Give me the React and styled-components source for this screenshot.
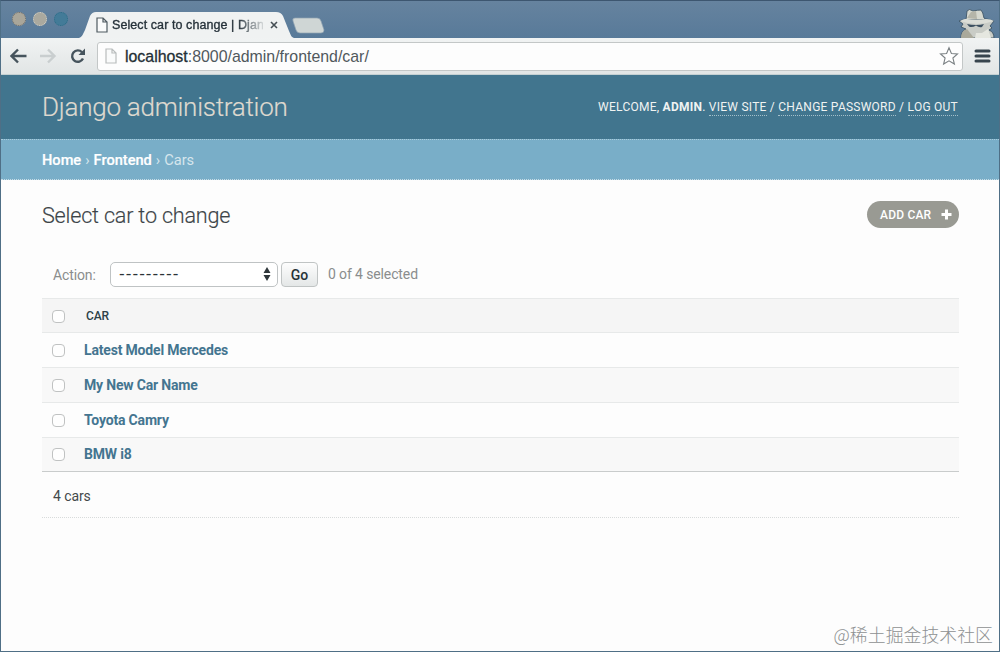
import React from 'react';
import styled, { createGlobalStyle } from 'styled-components';

const GlobalStyle = createGlobalStyle`
  * {
    box-sizing: border-box;
  }

  body {
    margin: 0;
    font-family: Roboto, 'Liberation Sans', sans-serif;
    overflow: hidden;
  }
`;

const Window = styled.div`
  position: relative;
  display: flex;
  flex-direction: column;
  width: 1000px;
  height: 652px;
  border: 1px solid #4f6f86;
  border-top-color: #3d5670;
  background: #fdfdfd;
`;

const TabStrip = styled.div`
  display: flex;
  align-items: flex-end;
  height: 37px;
  padding-left: 11px;
  background: linear-gradient(#66839f, #587a99);
`;

const Lights = styled.div`
  display: flex;
  gap: 7px;
  width: 67px;
  height: 26px;
`;

const Light = styled.span`
  width: 14px;
  height: 14px;
  border-radius: 50%;
  background: ${props => props.color};
  border: 1px dotted ${props => props.edge};
`;

const Tab = styled.div`
  position: relative;
  display: flex;
  align-items: center;
  width: 214px;
  height: 26px;
  padding-left: 17px;
  font: 12.5px 'Liberation Sans', sans-serif;
  color: #26323a;
`;

const TabShape = styled.svg`
  position: absolute;
  left: 0;
  top: 0;
`;

const TabTitle = styled.span`
  position: relative;
  width: 151px;
  margin-left: 4px;
  margin-right: 1px;
  white-space: nowrap;
  letter-spacing: 0.08px;
  -webkit-text-stroke: 0.35px #26323a;
  mask-image: linear-gradient(to right, #000 83%, rgba(0, 0, 0, 0.15));
`;

const TabIcon = styled.svg`
  position: relative;
  flex: none;
`;

const NewTab = styled.svg`
  margin: 0 auto 4px -1px;
`;

const Incognito = styled.svg`
  margin-right: 3px;
`;

const Toolbar = styled.div`
  display: flex;
  align-items: center;
  height: 37px;
  padding: 0 8px 0 9px;
  background: linear-gradient(#f1f3f3, #e1e5e5);
  border-bottom: 1px solid #c4d0d2;
`;

const NavIcons = styled.svg`
  flex: none;
  margin-right: 9px;
`;

const AddressBar = styled.div`
  display: flex;
  align-items: center;
  flex: 1;
  height: 29px;
  margin-right: 11px;
  padding: 0 3px 0 7px;
  border: 1px solid #c3c7c7;
  border-radius: 3px;
  background: #fdfdfd;
`;

const Url = styled.div`
  flex: 1;
  margin-left: 8px;
  padding-top: 1px;
  font: 15.9px 'Liberation Sans', sans-serif;
  color: #50585c;

  & span {
    color: #232e35;
    -webkit-text-stroke: 0.3px #232e35;
  }
`;

const Header = styled.header`
  display: flex;
  align-items: center;
  justify-content: space-between;
  height: 64px;
  padding: 0 41px;
  background: #41758e;
`;

const Branding = styled.h1`
  margin: 0;
  font-size: 26px;
  font-weight: 300;
  letter-spacing: -0.25px;
  color: #ded9cf;
  -webkit-text-stroke: 0.2px #ded9cf;
`;

const UserTools = styled.div`
  padding-top: 1px;
  font-size: 12px;
  letter-spacing: 0.25px;
  color: #f0f3f2;
  white-space: nowrap;
`;

const UserLink = styled.a`
  display: inline-block;
  line-height: 16px;
  border-bottom: 1px dotted #a5c0cb;
`;

const Breadcrumbs = styled.nav`
  display: flex;
  align-items: center;
  gap: 4px;
  height: 41px;
  padding-left: 41px;
  background: #79aec8;
  border-top: 1px dotted #a9cbdb;
  border-bottom: 1px dotted #c5dce6;
  font-size: 14.6px;
  color: #d6e6ed;

  & b {
    font-weight: 500;
    color: #fff;
    -webkit-text-stroke: 0.2px #fff;
  }
`;

const Content = styled.main`
  flex: 1;
  padding: 20px 40px 0 41px;
`;

const TitleRow = styled.div`
  display: flex;
  align-items: center;
  justify-content: space-between;
  height: 30px;
`;

const Title = styled.h2`
  margin: 0;
  font-size: 21.6px;
  font-weight: 300;
  letter-spacing: -0.2px;
  color: #3c4448;
  -webkit-text-stroke: 0.15px #3c4448;
`;

const AddButton = styled.a`
  display: flex;
  align-items: center;
  justify-content: space-between;
  width: 92px;
  height: 27px;
  margin-bottom: 2px;
  padding: 1px 7px 0 13px;
  border-radius: 14px;
  background: #999a93;
  color: #fff;
  font-size: 12px;
  font-weight: 500;
  letter-spacing: 0.2px;
`;

const Actions = styled.div`
  display: flex;
  align-items: center;
  height: 26px;
  margin-top: 31px;
  padding-left: 11px;
  font-size: 14px;
  letter-spacing: -0.12px;
  color: #8a8d8d;
`;

const Label = styled.label`
  width: 57px;
  padding-top: 2px;
`;

const Select = styled.div`
  display: flex;
  align-items: center;
  justify-content: space-between;
  width: 168px;
  height: 25px;
  margin-right: 3px;
  padding: 0 6px 0 8px;
  border: 1px solid #bfc3c4;
  border-radius: 5px;
  background: #fff;
  color: #2b3337;
  font: 17px 'Liberation Sans', sans-serif;
  letter-spacing: 1.05px;
`;

const GoButton = styled.button`
  width: 37px;
  height: 25px;
  margin-right: 10px;
  padding: 1px 0 0;
  border: 1px solid #c0c4c4;
  border-radius: 4px;
  background: linear-gradient(#fdfdfd, #e4e7e7);
  color: #263238;
  font: 500 14px Roboto, sans-serif;
`;

const Results = styled.div`
  margin-top: 11px;
  border-bottom: 1px solid #c9cccc;
`;

const Row = styled.div`
  display: flex;
  align-items: center;
  height: ${props => (props.$head ? 34.2 : 34.8)}px;
  padding-left: 10px;
  border-top: 1px solid #e7e9e9;
  background: ${props => props.$shade || '#fdfdfd'};
`;

const Checkbox = styled.span`
  width: 13px;
  height: 13px;
  margin-top: 1px;
  border: 1px solid #c0c2c2;
  border-radius: 4px;
  background: #fefefe;
`;

const HeadLabel = styled.span`
  margin: 1px 0 0 21px;
  font-size: 12px;
  font-weight: 500;
  letter-spacing: -0.2px;
  color: #2d4148;
`;

const CarLink = styled.a`
  margin-left: 19px;
  font-size: 14px;
  font-weight: 700;
  letter-spacing: -0.18px;
  color: #447590;
`;

const Paginator = styled.div`
  height: 46px;
  padding-left: 11px;
  border-bottom: 1px dotted #d8dbdb;
  line-height: 48px;
  font-size: 14px;
  letter-spacing: -0.1px;
  color: #44494b;
`;

const Watermark = styled.div`
  position: absolute;
  right: 6px;
  bottom: 5px;
  font: 300 17.9px/24px 'Noto Sans CJK SC', sans-serif;
  color: #8e9192;
`;

const cars = ['Latest Model Mercedes', 'My New Car Name', 'Toyota Camry', 'BMW i8'];

const PageIcon = ({ as: Svg = 'svg', color }) => (
  <Svg width="12" height="16" viewBox="0 0 12 16" fill="#fafbfb" stroke={color} strokeWidth="1.2">
    <path d="M1 1H7L11 5V15H1ZM7 1V5H11" />
  </Svg>
);

const Browser = () => (
  <>
    <TabStrip>
      <Lights>
        <Light color="#a9a69a" edge="#746f68" />
        <Light color="#aaa99f" edge="#d8d4c9" />
        <Light color="#437b98" edge="#2b6c86" />
      </Lights>
      <Tab>
        <TabShape width="216" height="26">
          <path d="M0 26C3 25 4 22 6 18L11 4Q13 0 17 0H197Q202 0 204 4L210 19C212 23 212 25 215 26Z" fill="#f0f2f2" />
        </TabShape>
        <PageIcon as={TabIcon} color="#4f5a61" />
        <TabTitle>Select car to change | Djan</TabTitle>
        <TabIcon width="15" height="8" viewBox="-6 0 15 8">
          <path d="M1 1L7 7M7 1L1 7" stroke="#454e54" strokeWidth="1.6" />
        </TabIcon>
      </Tab>
      <NewTab width="33" height="17">
        <path d="M3 1H25Q28 1 29 4L32 13Q32 16 29 16H8Q5 16 4 13L1 4Q0 1 3 1Z" fill="#cfd6d5" stroke="#91a3b1" strokeWidth="0.7" />
      </NewTab>
      <Incognito width="38" height="29" viewBox="0 0 38 29">
        <path d="M3 29Q3 22 8 20L3 18L5 15L1 12L8 10H29L36 12L32 17L34 19L31 21Q36 23 36 29Z" fill="#c9ccc6" stroke="#3b5366" strokeWidth="0.9" />
        <path d="M8 11L9 2Q11 -1 15 2Q20 1 23 1Q25 3 26 9L29 11Z" fill="#d6d8cf" stroke="#3f5668" strokeWidth="0.9" />
        <path d="M2 12Q8 9 9 10Q18 12 28 10Q33 10 36 12Q19 18 2 12Z" fill="#dcded7" />
        <path d="M13 3L18 2L19 10L9 9Z" fill="#b5b5a9" />
        <path d="M9 15Q13 16 18 16Q23 16 26 15L24 18Q21 19 18 16.5Q14 19 11 17.5Z" fill="#3d5060" />
        <path d="M3 29Q3 22 9 20L16 29Z" fill="#aaa99b" />
        <path d="M17 29L18 24L24 24L30 20L33 29Z" fill="#e5e7e0" />
      </Incognito>
    </TabStrip>
    <Toolbar>
      <NavIcons width="78" height="20" fill="none" strokeWidth="2.4">
        <path d="M16.5 10H2M8 3.5L1.5 10L8 16.5" stroke="#46545d" />
        <path d="M30 10H44M38 3.5L44.5 10L38 16.5" stroke="#c9cecf" />
        <path d="M72 6.2A5.7 5.7 0 1 0 73 12.5" stroke="#46545d" />
        <path d="M75 2.5V9H68.5Z" fill="#46545d" stroke="none" />
      </NavIcons>
      <AddressBar>
        <PageIcon color="#b9bdbd" />
        <Url>
          <span>localhost</span>:8000/admin/frontend/car/
        </Url>
        <svg width="20" height="20" viewBox="0 0 20 20">
          <path d="M10 1.7L12.4 7.5L18.5 8L13.9 12L15.4 18L10 14.8L4.6 18L6.1 12L1.5 8L7.6 7.5Z" fill="#fff" stroke="#7b8184" strokeWidth="1.1" />
        </svg>
      </AddressBar>
      <svg width="17" height="16">
        <path d="M2 3H15M2 8H15M2 13H15" stroke="#37444d" strokeWidth="3" strokeLinecap="round" />
      </svg>
    </Toolbar>
  </>
);

const App = () => (
  <Window>
    <GlobalStyle />
    <Browser />
    <Header>
      <Branding>Django administration</Branding>
      <UserTools>
        WELCOME, <b>ADMIN</b>. <UserLink>VIEW SITE</UserLink> / <UserLink>CHANGE PASSWORD</UserLink> /{' '}
        <UserLink>LOG OUT</UserLink>
      </UserTools>
    </Header>
    <Breadcrumbs>
      <b>Home</b>›<b>Frontend</b>›<span>Cars</span>
    </Breadcrumbs>
    <Content>
      <TitleRow>
        <Title>Select car to change</Title>
        <AddButton>
          ADD CAR
          <svg width="11" height="11">
            <path d="M5.5 0.5V10.5M0.5 5.5H10.5" stroke="#fff" strokeWidth="3" />
          </svg>
        </AddButton>
      </TitleRow>
      <Actions>
        <Label>Action:</Label>
        <Select>
          ---------
          <svg width="8" height="14" fill="#2f373b">
            <path d="M0.5 6L4 0L7.5 6ZM0.5 8L4 14L7.5 8Z" />
          </svg>
        </Select>
        <GoButton>Go</GoButton>
        <span>0 of 4 selected</span>
      </Actions>
      <Results>
        <Row $head $shade="#f5f5f5">
          <Checkbox />
          <HeadLabel>CAR</HeadLabel>
        </Row>
        {cars.map((car, i) => (
          <Row key={car} $shade={i % 2 ? '#f8f8f8' : ''}>
            <Checkbox />
            <CarLink>{car}</CarLink>
          </Row>
        ))}
      </Results>
      <Paginator>{cars.length} cars</Paginator>
    </Content>
    <Watermark>@稀土掘金技术社区</Watermark>
  </Window>
);

export default App;
